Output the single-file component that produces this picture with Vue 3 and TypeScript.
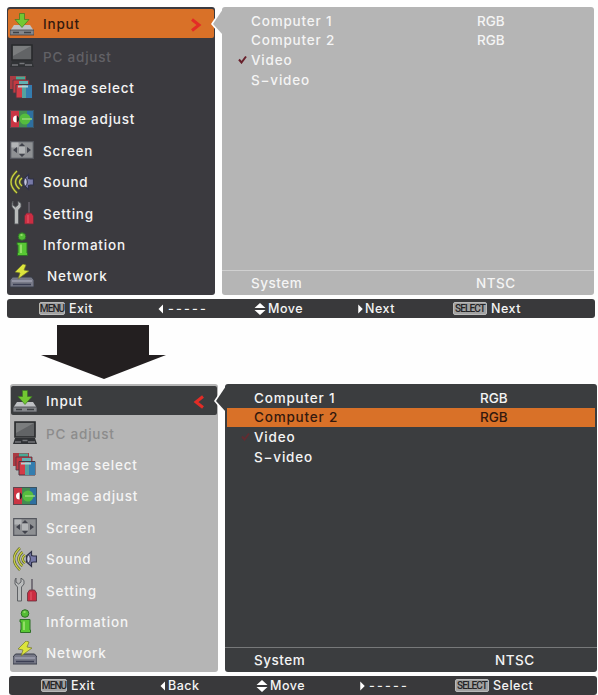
<script setup lang="ts">
interface MenuItem {
  icon: string
  label: string
}

interface Source {
  name: string
  signal?: string
  checked?: boolean
  selected?: boolean
}

interface Hint {
  key?: string
  arrow?: 'left' | 'right' | 'updown'
  text: string
}

interface Screen {
  id: string
  focus: 'menu' | 'panel'
  sources: Source[]
  hints: Hint[]
}

const items: MenuItem[] = [
  { icon: 'input', label: 'Input' },
  { icon: 'pc', label: 'PC adjust' },
  { icon: 'select', label: 'Image select' },
  { icon: 'adjust', label: 'Image adjust' },
  { icon: 'screen', label: 'Screen' },
  { icon: 'sound', label: 'Sound' },
  { icon: 'setting', label: 'Setting' },
  { icon: 'info', label: 'Information' },
  { icon: 'network', label: 'Network' },
]

const screens: Screen[] = [
  {
    id: 'first',
    focus: 'menu',
    sources: [
      { name: 'Computer 1', signal: 'RGB' },
      { name: 'Computer 2', signal: 'RGB' },
      { name: 'Video', checked: true },
      { name: 'S−video' },
    ],
    hints: [
      { key: 'MENU', text: 'Exit' },
      { arrow: 'left', text: '-----' },
      { arrow: 'updown', text: 'Move' },
      { arrow: 'right', text: 'Next' },
      { key: 'SELECT', text: 'Next' },
    ],
  },
  {
    id: 'second',
    focus: 'panel',
    sources: [
      { name: 'Computer 1', signal: 'RGB' },
      { name: 'Computer 2', signal: 'RGB', selected: true },
      { name: 'Video', checked: true },
      { name: 'S−video' },
    ],
    hints: [
      { key: 'MENU', text: 'Exit' },
      { arrow: 'left', text: 'Back' },
      { arrow: 'updown', text: 'Move' },
      { arrow: 'right', text: '-----' },
      { key: 'SELECT', text: 'Select' },
    ],
  },
]
</script>

<template>
  <div class="page">
    <svg class="defs" width="0" height="0">
      <symbol id="i-input" viewBox="0 0 24 24">
        <path d="M4 13h16l4 6v4H0v-4z" fill="#bfc1c4" />
        <path d="M0 18h24v5H0z" fill="#85878b" stroke="#3f4246" stroke-width=".8" />
        <path d="M3 20.5h6M14 20.5h7" stroke="#3f4246" stroke-width="1.5" />
        <path d="M9.5 1.500h5v6H19l-7 8-7-8h4.500z" fill="#72c832" stroke="#3c7a22" stroke-width=".7" />
      </symbol>
      <symbol id="i-pc" viewBox="0 0 24 24">
        <path d="M2 1h20v15H2z" fill="#626466" stroke="#292a2c" stroke-width="1.600" />
        <path d="M3 2h18L3 12z" fill="#7b7d7e" />
        <path d="M2 17h20l2 6H0z" fill="#303235" />
        <path d="M2 21h6M9.500 19.500h5M15 21h7" stroke="#74767a" stroke-width="1.300" />
      </symbol>
      <symbol id="i-select" viewBox="0 0 24 24">
        <path d="M0 1h16v13H0z" fill="#a93b42" />
        <path d="M6 1.500h9v3H6z" fill="#48a995" />
        <path d="M3 5h16v13H3z" fill="#c63840" stroke="#513844" stroke-width=".8" />
        <path d="M9 6h9v3H9z" fill="#62b0b2" />
        <path d="M6 9.500h16V23H6z" fill="#d33d47" stroke="#4a3642" />
        <path d="M12 10h5v13h-5z" fill="#56a29f" />
        <path d="M16 10h6v13h-6z" fill="#347daf" />
        <path d="M8 10.500h10v2H8z" fill="#b7d0d1" />
      </symbol>
      <symbol id="i-adjust" viewBox="0 0 24 24">
        <path d="M0 3h9v18H0z" fill="#cb3544" />
        <path d="M9 3h8v18H9z" fill="#438c51" />
        <path d="M17 3h7v18h-7z" fill="#2e6fa0" />
        <circle cx="15" cy="12" r="5.500" fill="#55bd3e" />
        <path d="M12 11.300h10v1.400H12z" fill="#9bdc7a" />
        <path d="M7 8.500a4 4 0 0 1 0 7z" fill="#252126" />
        <path d="M6.500 8.500a3.500 3.500 0 0 0 0 7z" fill="#fff" />
        <path d="M.5 3.500h23v17H.5z" fill="none" stroke="#3d4c52" stroke-width=".8" />
      </symbol>
      <symbol id="i-screen" viewBox="0 0 24 24">
        <path d="M.7 3.700h22.600v16.600H.7z" fill="#8f9194" stroke="#55575e" stroke-width="1.200" />
        <path d="M1.500 4.500h7v5h-7zM9 9h6v6H9z" fill="#b3b5b7" />
        <path d="M3 12l4-3v6zM21 12l-4-3v6zM12 5l3 3H9zM12 19l3-3H9z" fill="#41434c" />
      </symbol>
      <symbol id="i-sound" viewBox="0 0 24 24">
        <g fill="none" stroke="#59602c" stroke-width="2.600">
          <path d="M7 1q-12 11 0 22M9.500 5q-8 7 0 14M12 8q-5 4 0 8" />
        </g>
        <g fill="none" stroke="#cbd144" stroke-width="1.300">
          <path d="M7 1q-12 11 0 22M9.500 5q-8 7 0 14M12 8q-5 4 0 8" />
        </g>
        <path d="M13.500 9l5-4.500v4l2 .5h3v6h-3l-2 .5v4L13.500 15z" fill="#7779a8" stroke="#2f3148" stroke-width="1.200" />
        <ellipse cx="15.500" cy="12" rx="1.800" ry="3.800" fill="#c4c5de" stroke="#292b40" />
      </symbol>
      <symbol id="i-setting" viewBox="0 0 24 24">
        <path d="M3 0v4l2.500 2L8 4V0l3 2.500V6L8.500 9v14H4.500V9L2 6V2z" fill="#b9bbbb" stroke="#55585b" stroke-width=".9" />
        <path d="M19 1v13" stroke="#65606a" stroke-width="1.600" />
        <path d="M16.500 12h5l2 3v8h-9v-8z" fill="#cb2d42" stroke="#64303c" stroke-width=".8" />
        <path d="M18 14v8" stroke="#e65d6b" />
      </symbol>
      <symbol id="i-info" viewBox="0 0 24 24">
        <circle cx="12" cy="4.500" r="3.800" fill="#54bc35" stroke="#2f6f28" />
        <path d="M7 10.500h10V21h.5v2.500h-10V21H8v-8H7z" fill="#58c734" stroke="#2f6f28" />
        <path d="M10.500 3h2M11 12.500V21" stroke="#a5e877" stroke-width="1.500" />
      </symbol>
      <symbol id="i-network" viewBox="0 0 24 24">
        <path d="M2.500 13h19L24 16v7H0v-7z" fill="#777987" stroke="#393c48" />
        <path d="M2 17h20" stroke="#b1b2c2" />
        <path d="M3 20.500h18" stroke="#3b3e53" stroke-width="1.500" />
        <path d="M13 0L5 8l5 1-2 6 11-8-5-1 2-5z" fill="#dce43c" stroke="#74792e" stroke-width=".7" />
      </symbol>
    </svg>

    <template v-for="(screen, i) in screens" :key="screen.id">
      <svg v-if="i > 0" class="step" viewBox="0 0 125 54">
        <path d="M16 0h92v30h17L63 54 0 30h16z" />
      </svg>

      <section class="osd" :class="[screen.id, `focus-${screen.focus}`]">
        <div class="body">
          <ul class="menu">
            <li v-for="(item, n) in items" :key="item.icon" class="item" :class="[`item-${item.icon}`, { current: n === 0 }]">
              <svg class="icon"><use :href="`#i-${item.icon}`" /></svg>
              <span class="label">{{ item.label }}</span>
              <svg v-if="n === 0" class="chevron" viewBox="0 0 12 14">
                <path v-if="screen.focus === 'menu'" d="M2 1.500L9 7l-7 5.500" />
                <path v-else d="M10 1.500L3 7l7 5.500" />
              </svg>
            </li>
          </ul>

          <div class="panel">
            <svg class="notch" viewBox="0 0 12 30">
              <path class="gap" d="M10 0L0 15l10 12z" />
              <path class="fill" d="M12 0L2 15l10 11z" />
            </svg>
            <div v-for="source in screen.sources" :key="source.name" class="source" :class="{ selected: source.selected }">
              <span class="mark">
                <svg v-if="source.checked" viewBox="0 0 9 9"><path d="M1 4.500l2.500 3L8 1.500" /></svg>
              </span>
              <span>{{ source.name }}</span>
              <span class="signal">{{ source.signal }}</span>
            </div>
            <div class="system">
              <span>System</span>
              <span class="value">NTSC</span>
            </div>
          </div>
        </div>

        <footer class="hints">
          <div v-for="(hint, h) in screen.hints" :key="h" class="hint">
            <span v-if="hint.key" class="key" :class="`key-${hint.key.toLowerCase()}`">{{ hint.key }}</span>
            <svg v-if="hint.arrow" class="arrow" :class="`arrow-${hint.arrow}`" viewBox="0 0 12 12">
              <path v-if="hint.arrow === 'left'" d="M8 0v12L2 6z" />
              <path v-else-if="hint.arrow === 'right'" d="M3 0v12l6-6z" />
              <path v-else d="M6 0l5.500 5H.5zM.5 7h11L6 12z" />
            </svg>
            <span :class="{ dashes: hint.text === '-----' }">{{ hint.text }}</span>
          </div>
        </footer>
      </section>
    </template>
  </div>
</template>

<style>
body {
  margin: 0;
  background: #fefefe;
}
</style>

<style scoped>
.page {
  box-sizing: border-box;
  width: 598px;
  height: 695px;
  padding-top: 7px;
  overflow: hidden;
  font-family: Inter, "Liberation Sans", sans-serif;
  font-size: 13.5px;
  font-weight: 500;
  letter-spacing: 0.8px;
  color: #f4f4f4;
}

.defs {
  display: block;
}

.osd {
  width: 588px;
  margin-left: 7px;
}

.second {
  margin-left: 9px;
}

.body {
  display: flex;
  gap: 7px;
  height: 288px;
}

.second .body {
  padding-left: 1px;
}

.menu {
  box-sizing: border-box;
  width: 208px;
  margin: 0;
  padding: 2px 1px 0;
  list-style: none;
  border-radius: 3px;
  background: #3b3a3f;
}

.focus-panel .menu {
  background: #b5b5b5;
}

.item {
  display: flex;
  align-items: center;
  box-sizing: border-box;
  height: 31.4px;
  padding-left: 2px;
}

.icon {
  width: 24px;
  height: 24px;
  flex: none;
}

.label {
  margin-left: 9px;
  padding-top: 1px;
  white-space: nowrap;
}

.first .item-network .label {
  margin-left: 13px;
}

.current {
  height: 29px;
  margin-bottom: 2.4px;
  border-radius: 2px;
}

.focus-menu .current {
  background: #d97128;
  color: #33190e;
}

.focus-panel .current {
  background: #3b3d3f;
}

.item-pc .label {
  color: #626166;
}

.focus-panel .item-pc .label {
  color: #8c8c8c;
}

.chevron {
  width: 12px;
  height: 14px;
  margin-top: 2px;
  margin-left: auto;
  margin-right: 12px;
  fill: none;
  stroke: #e32c26;
  stroke-width: 3;
}

.panel {
  position: relative;
  display: flex;
  flex-direction: column;
  box-sizing: border-box;
  width: 372px;
  padding-top: 4px;
  border-radius: 3px;
  background: #b5b5b5;
}

.focus-panel .panel {
  background: #3b3d3f;
}

.notch {
  position: absolute;
  left: -11px;
  top: 2px;
  width: 12px;
  height: 30px;
}

.gap {
  fill: #fefefe;
}

.fill {
  fill: #b5b5b5;
}

.focus-panel .fill {
  fill: #3b3d3f;
}

.source {
  display: grid;
  grid-template-columns: 13px 226px 1fr;
  align-items: center;
  height: 19.6px;
  margin: 0 2px;
  padding-left: 14px;
}

.selected {
  background: #d97128;
  color: #33190e;
}

.signal {
  letter-spacing: 0;
}

.mark {
  display: flex;
}

.mark svg {
  width: 9px;
  height: 9px;
  fill: none;
  stroke: #68202b;
  stroke-width: 2;
}

.focus-panel .mark svg {
  stroke: #622c31;
}

.system {
  display: grid;
  grid-template-columns: 225px 1fr;
  align-items: center;
  height: 24px;
  margin-top: auto;
  padding-left: 29px;
  border-top: 1px solid #d0d0d0;
}

.system span {
  letter-spacing: 0.5px;
}

.focus-panel .system {
  border-color: #77797a;
}

.focus-panel .value {
  padding-left: 16px;
}

.hints {
  display: grid;
  grid-template-columns: 118px 97px 102px 97px 1fr;
  align-items: center;
  box-sizing: border-box;
  height: 19px;
  margin-top: 4px;
  padding-left: 32px;
  border-radius: 3px;
  background: #39393b;
  font-size: 12.5px;
  letter-spacing: 0.5px;
}

.hint {
  display: flex;
  align-items: center;
}

.key {
  display: flex;
  align-items: center;
  justify-content: center;
  box-sizing: border-box;
  width: 26px;
  height: 13px;
  margin-right: 4px;
  border: 1px solid #b9b9b9;
  border-radius: 2px;
  background: #a2a2a2;
  color: #242426;
  font-family: Roboto, sans-serif;
  font-size: 10px;
  letter-spacing: -0.9px;
}

.key-select {
  width: 34px;
}

.arrow {
  width: 12px;
  height: 12px;
  margin-right: 2px;
  fill: #fff;
}

.arrow-left,
.arrow-right {
  width: 9px;
  margin-right: 0;
}

.dashes {
  margin-left: 2px;
  letter-spacing: 2.2px;
}

.step {
  display: block;
  width: 125px;
  height: 54px;
  margin: 7px 0 5px 41px;
  fill: #231f20;
}
</style>
